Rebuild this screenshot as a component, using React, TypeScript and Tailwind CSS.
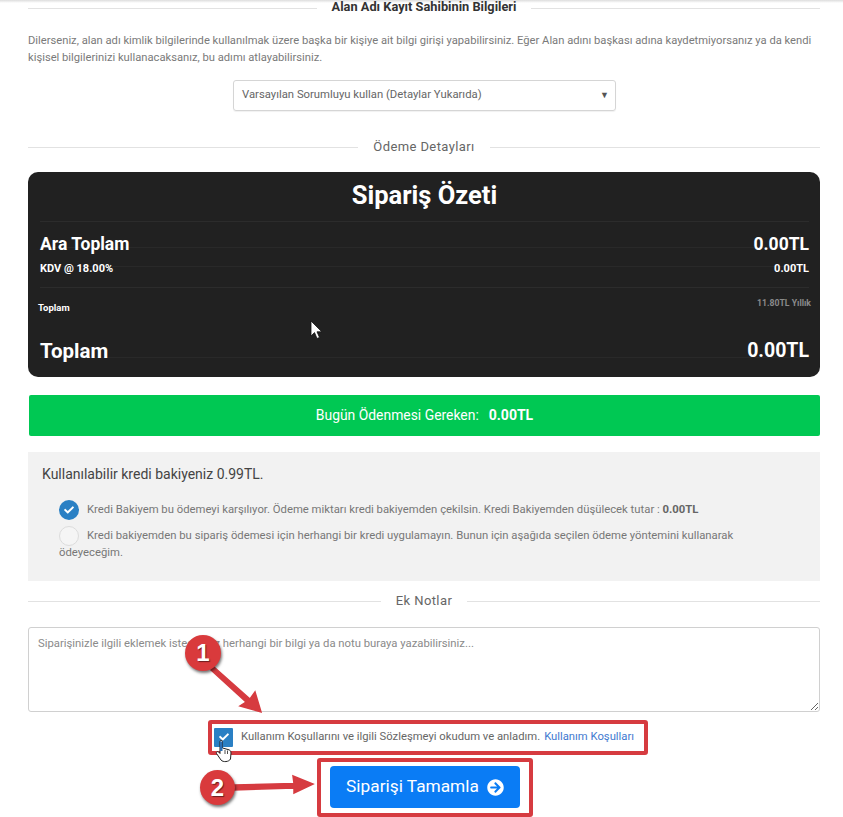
import React from 'react';
import { FaArrowCircleRight, FaCheck } from 'react-icons/fa';

const headingFont = "font-['Roboto',sans-serif]";

const SectionTitle = ({ title, className, textClassName }: { title: string; className: string; textClassName: string }) => (
  <div className={`flex items-center ${className}`}>
    <div className="h-px flex-1 bg-[#e2e2e2]" />
    <span className={`px-[15px] ${textClassName}`}>{title}</span>
    <div className="h-px flex-1 bg-[#e2e2e2]" />
  </div>
);

const SummaryRow = ({ left, right, height, pad, textClassName }: { left: string; right: string; height: string; pad: string; textClassName: string }) => (
  <div className={`flex justify-between items-start border-b border-[#292929] ${height} ${pad} ${textClassName}`}>
    <span>{left}</span>
    <span>{right}</span>
  </div>
);

const Annotations = () => (
  <>
    <div className="absolute left-[208px] top-[720px] w-[440px] h-[35px] border-4 border-[#d63b40] rounded-[3px]" />
    <div className="absolute left-[317px] top-[758px] w-[216px] h-[59px] border-4 border-[#d63b40] rounded-[3px]" />
    <svg className="absolute left-0 top-0" width="843" height="817" viewBox="0 0 843 817">
      <path d="M214 667 L250 699 L255 692 L261 712 L240 706 L246 702 L211 670 Z" fill="#d63b40" stroke="#d63b40" strokeWidth="1.5" />
      <path d="M234 785 L294 783.5 L293 776 L313 784 L294 793 L294 788 L234 790 Z" fill="#d63b40" stroke="#d63b40" strokeWidth="1.5" />
    </svg>
    <div className="absolute left-[185px] top-[635px] w-[36px] h-[36px] rounded-full bg-[#d93a3c] shadow-[1px_2px_3px_rgba(0,0,0,0.55)] flex items-center justify-center text-white text-[24px] font-bold font-['Liberation_Sans',sans-serif] [text-shadow:1px_1px_1px_rgba(0,0,0,0.5)]">1</div>
    <div className="absolute left-[200px] top-[770px] w-[35px] h-[35px] rounded-full bg-[#d93a3c] shadow-[1px_2px_3px_rgba(0,0,0,0.55)] flex items-center justify-center text-white text-[24px] font-bold font-['Liberation_Sans',sans-serif] [text-shadow:1px_1px_1px_rgba(0,0,0,0.5)]">2</div>
    {/* mouse pointer over the card */}
    <svg className="absolute left-[310px] top-[320px]" width="13" height="20" viewBox="0 0 13 20">
      <path d="M1 1 L1 16 L4.5 12.6 L7 18.5 L9.5 17.4 L7 11.8 L11.8 11.8 Z" fill="#fff" stroke="#111" strokeWidth="0.8" />
    </svg>
    {/* hand pointer over the checkbox */}
    <svg className="absolute left-[215px] top-[739px]" width="18" height="24" viewBox="0 0 18 24">
      <path d="M5 2.5 C5 1 7.5 1 7.5 2.5 L7.5 9 L13 10.5 C15 11 16 12 16 14 L15.5 20 C14 23 8 23.5 6 21 L1.5 14.5 C0.8 13 2.5 12 3.8 13 L5 14.5 Z" fill="#fff" stroke="#222" strokeWidth="1" />
      <path d="M5 2.5 L5 12 L7.5 12 L7.5 2.5 Z" fill="#2a6fb5" />
      <path d="M10 11 L10 15 M12.5 11.5 L12.5 15" stroke="#222" strokeWidth="0.8" />
    </svg>
  </>
);

export default function App() {
  return (
    <div className="relative h-[817px] w-[843px] overflow-hidden bg-white font-['Roboto',sans-serif]">
      <div className="h-[3px] bg-gradient-to-b from-[#dddddd] to-white" />
      <div className="pl-[28px] pr-[23px]">
        <SectionTitle title="Alan Adı Kayıt Sahibinin Bilgileri" className="h-[10px]" textClassName={`${headingFont} -mt-[3px] text-[12.8px] font-bold text-[#333]`} />

        <p className="mt-[19px] text-[11.2px] leading-[17px] text-[#7a7a7a]">
          Dilerseniz, alan adı kimlik bilgilerinde kullanılmak üzere başka bir kişiye ait bilgi girişi yapabilirsiniz. Eğer Alan adını başkası adına kaydetmiyorsanız ya da kendi kişisel bilgilerinizi kullanacaksanız, bu adımı atlayabilirsiniz.
        </p>

        <div className="mt-[14px] ml-[205px] flex h-[31px] w-[383px] items-center justify-between rounded-[3px] border border-[#d5d5d5] pl-[8px] pr-[6px] text-[11.3px] text-[#666] shadow-[0_1px_1px_rgba(0,0,0,0.06)]">
          <span>Varsayılan Sorumluyu kullan (Detaylar Yukarıda)</span>
          <span className="text-[9px] text-[#555]">▼</span>
        </div>

        <SectionTitle title="Ödeme Detayları" className="mt-[26px] h-[20px]" textClassName="text-[13px] tracking-[0.4px] text-[#666]" />

        <div className={`mt-[15px] h-[205px] rounded-[10px] bg-[#212121] pl-[12px] pr-[11px] text-white ${headingFont}`}>
          <div className="flex h-[50px] items-center justify-center border-b border-[#2c2c2c] pb-[2px] text-[25.5px] font-bold">
            Sipariş Özeti
          </div>
          <SummaryRow left="Ara Toplam" right="0.00TL" height="h-[26px]" pad="pt-[12px]" textClassName="text-[17.5px] leading-[20px] font-bold" />
          <SummaryRow left="KDV @ 18.00%" right="0.00TL" height="h-[19px]" pad="pt-[11px]" textClassName="text-[11px] leading-[20px] font-bold" />
          <div className="h-[21px] border-b border-[#2c2c2c]" />
          <div className="flex h-[70px] items-start justify-between border-b border-[#292929] pl-0">
            <div className="flex h-full flex-col">
              <span className="mt-[14px] -ml-[2px] text-[9.5px] leading-[12px] font-bold">Toplam</span>
              <span className="mt-[24px] text-[20.5px] leading-[26px] font-bold">Toplam</span>
            </div>
            <div className="flex h-full flex-col items-end">
              <span className="mt-[9px] mr-[-2px] text-[8.7px] leading-[12px] font-bold text-[#8a8a8a]">11.80TL Yıllık</span>
              <span className="mt-[29px] text-[19.5px] leading-[26px] font-bold">0.00TL</span>
            </div>
          </div>
        </div>

        <div className="mt-[18px] ml-px flex h-[41px] items-center justify-center rounded-[2px] bg-[#00c853] text-white">
          <span className="text-[13.9px]">Bugün Ödenmesi Gereken:</span>
          <span className={`ml-[10px] text-[14px] font-bold ${headingFont}`}>0.00TL</span>
        </div>

        <div className="mt-[16px] h-[129px] bg-[#f2f2f2] pt-[14px] pl-[14px] pr-[60px]">
          <div className="text-[14px] leading-[17px] text-[#444]">Kullanılabilir kredi bakiyeniz 0.99TL.</div>
          <div className="mt-[16px] ml-[17px] flex h-[22px] items-center text-[11.3px] text-[#777]">
            <span className="mr-[8px] flex h-[20px] w-[20px] items-center justify-center rounded-full bg-[#2a80c4] text-white">
              <FaCheck size={10} />
            </span>
            <span>
              Kredi Bakiyem bu ödemeyi karşılıyor. Ödeme miktarı kredi bakiyemden çekilsin. Kredi Bakiyemden düşülecek tutar : <b className="font-bold text-[#666]">0.00TL</b>
            </span>
          </div>
          <p className="mt-[6px] ml-[17px] text-[11.3px] leading-[17px] text-[#777]">
            <span className="mr-[8px] -my-[2px] inline-block h-[20px] w-[20px] rounded-full border border-[#dcdcdc] bg-[#f5f5f5] align-middle" />
            Kredi bakiyemden bu sipariş ödemesi için herhangi bir kredi uygulamayın. Bunun için aşağıda seçilen ödeme yöntemini kullanarak ödeyeceğim.
          </p>
        </div>

        <SectionTitle title="Ek Notlar" className="mt-[10px] h-[20px]" textClassName="text-[13px] tracking-[0.4px] text-[#666]" />

        <textarea
          readOnly
          className="mt-[16px] block h-[85px] w-full rounded-[3px] border border-[#d0d0d0] px-[9px] py-[7px] text-[11.3px] leading-[17px] placeholder:text-[#8a8a8a]"
          placeholder="Siparişinizle ilgili eklemek istediğiniz herhangi bir bilgi ya da notu buraya yazabilirsiniz..."
        />

        <div className="mt-[15px] flex h-[20px] items-center pl-[186px] text-[11.25px] text-[#666]">
          <span className="mr-[8px] flex h-[19px] w-[19px] items-center justify-center rounded-[1px] bg-[#2a80c4] text-white">
            <FaCheck size={10} />
          </span>
          <span>Kullanım Koşullarını ve ilgili Sözleşmeyi okudum ve anladım.</span>
          <a className="ml-[4px] text-[#3f7ad0]">Kullanım Koşulları</a>
        </div>

        <div className="mt-[19px] ml-[302px] flex h-[42px] w-[190px] items-center justify-center gap-[8px] rounded-[4px] bg-[#0a7cf5] text-[17.3px] text-white">
          <span>Siparişi Tamamla</span>
          <FaArrowCircleRight size={17} />
        </div>
      </div>
      <Annotations />
    </div>
  );
}
